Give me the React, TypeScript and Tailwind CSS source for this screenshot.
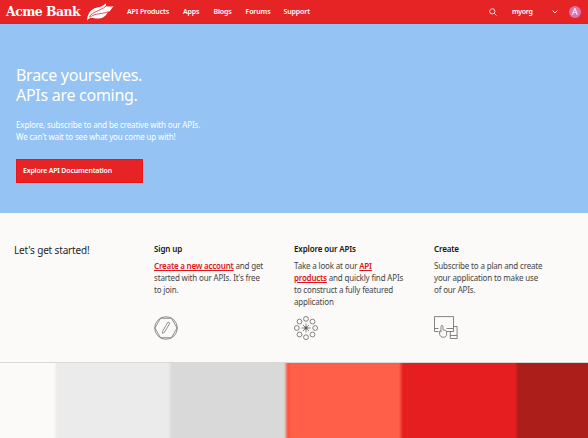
import type { ReactNode } from 'react';

function Leaf() {
  return (
    <svg className="ml-[3px] h-[18px] w-[28px] shrink-0" viewBox="0 0 28 18">
      <path
        fill="#fff"
        d="M1 17.500C1.500 12 3.500 8 8 5.600 11 4 16 4.500 19.500.500c.7.900.7 1.900.3 2.700C22 3.500 25 3.900 27.700 3c-1.500 1.300-1.800 2.600-3.200 4.300-.8 1-1.800 1.500-2.700 2C21 11 19.500 13 17 14.500c-3.500 1.800-8.500.6-12 .5C3 15.200 2 16.300 1 17.500Z"
      />
      <path
        fill="none"
        stroke="#e62325"
        strokeWidth=".8"
        d="M3 14.300C7 8 13.500 8.500 20 3.200M4 14.300C9 9.800 16 11.500 22.500 8.600"
      />
    </svg>
  );
}

function Header() {
  return (
    <header className="flex h-6 shrink-0 items-center border-b border-[#ee1c1c] bg-[#e62325] pl-[6px] pr-[7px] text-white">
      <div className="w-[77px] whitespace-nowrap font-['DejaVu_Serif_Condensed','DejaVu_Serif',serif] text-[13.800px] font-bold leading-none tracking-[-0.500px]">
        Acme Bank
      </div>
      <Leaf />
      <nav className="ml-[13px] flex whitespace-nowrap pt-[2px] text-[7px] font-semibold tracking-[-0.120px]">
        <span className="w-[56px]">API Products</span>
        <span className="w-[30.500px]">Apps</span>
        <span className="w-[32px]">Blogs</span>
        <span className="w-[38px]">Forums</span>
        <span>Support</span>
      </nav>
      <svg className="ml-auto size-2" viewBox="0 0 8 8" fill="none" stroke="#fff" strokeWidth=".8">
        <circle cx="3.300" cy="3.300" r="2.600" />
        <path d="m5.200 5.200 2.300 2.300" />
      </svg>
      <span className="ml-[15px] w-[40px] pt-px text-[7px] font-semibold tracking-[-0.350px]">myorg</span>
      <svg className="h-[4px] w-[6px]" viewBox="0 0 6 4" fill="none" stroke="#fff" strokeWidth=".9">
        <path d="m.6.6 2.400 2.400L5.400.6" />
      </svg>
      <span className="ml-[11px] flex size-3 items-center justify-center rounded-full bg-[#d874ab] text-[9px] leading-none">A</span>
    </header>
  );
}

function Hero() {
  return (
    <section className="h-[189px] shrink-0 bg-[#95c3f3] pl-4 pt-[41px] text-white">
      <h1 className="whitespace-nowrap text-[16px] font-normal leading-[20px] tracking-[-0.280px]">
        <span className="block">Brace yourselves.</span>
        <span className="block">APIs are coming.</span>
      </h1>
      <p className="mt-[14px] whitespace-nowrap text-[8px] leading-[12px] tracking-[-0.150px]">
        <span className="block">Explore, subscribe to and be creative with our APIs.</span>
        <span className="block">We can't wait to see what you come up with!</span>
      </p>
      <button className="mt-[16px] flex h-6 w-[127px] items-center border border-[#ee1418] bg-[#e62325] pl-[6px] text-[7px] font-semibold tracking-[-0.200px]">
        Explore API Documentation
      </button>
    </section>
  );
}

function Step({ title, children, icon }: { title: string; children: ReactNode; icon: ReactNode }) {
  return (
    <div className="flex h-full w-[140px] flex-col">
      <h3 className="text-[8px] font-semibold leading-[12px] tracking-[-0.130px] text-[#161616]">{title}</h3>
      <p className="mt-[5px] h-[56px] whitespace-nowrap text-[8px] leading-[12px] tracking-[-0.170px] text-[#454545]">{children}</p>
      {icon}
    </div>
  );
}

function Link({ children }: { children: ReactNode }) {
  return <a className="font-semibold tracking-[-0.220px] text-[#e3141b] underline decoration-[0.700px] underline-offset-1">{children}</a>;
}

function PencilIcon() {
  return (
    <svg className="size-6" viewBox="0 0 24 24" fill="none" stroke="#666" strokeWidth=".7">
      <circle cx="12" cy="12" r="11.300" />
      <path d="M6.500 2.300h11l5.600 9.700-5.600 9.700h-11L.9 12Z" />
      <path d="m8.600 15.200 5.400-9.200 1.900 1.100-5.400 9.200-2 1Z" />
    </svg>
  );
}

function NetworkIcon() {
  const dots = [[12, 2.900], [18.500, 5.600], [21.200, 12], [18.500, 18.500], [12, 21.200], [5.500, 18.500], [2.800, 12], [5.500, 5.600]];
  return (
    <svg className="size-6" viewBox="0 0 24 24" fill="none" stroke="#666" strokeWidth=".8">
      {dots.map(([x, y]) => <circle key={`${x}-${y}`} cx={x} cy={y} r="2.400" />)}
      <path d="M12 7.500v9M7.500 12h9M8.900 8.900l6.200 6.200M15.100 8.900l-6.200 6.200" />
      <circle cx="12" cy="12" r="1.100" fill="#222" />
    </svg>
  );
}

function DevicesIcon() {
  return (
    <svg className="size-6" viewBox="0 0 24 24" fill="none" stroke="#666" strokeWidth=".8">
      <path d="M4.500 15.500h-4V.6h19v14.900h-7M.5 12.500h4M12.500 12.500h7" />
      <path d="M19.500 10.500h3.600v12h-6.800v-7M16.300 19.500h6.800" />
      <path d="M7 16.500v-6c0-1.500 2-1.500 2 0v3.300l2.700.7c.7.2.9.6.9 1.300v2.500c0 2-1.200 3-3.200 3s-3.200-1-3.700-3l-.4-2.500c0-.8.700-1.300 1.700-.8" fill="#fbfaf8" />
    </svg>
  );
}

function GettingStarted() {
  return (
    <section className="flex h-[150px] shrink-0 border-b border-[#d8d8d8] bg-[#fbfaf8] pl-[14px] pt-[30px]">
      <h2 className="w-[140px] whitespace-nowrap text-[10px] font-normal leading-[14px] tracking-[-0.150px] text-[#262626]">Let's get started!</h2>
      <Step title="Sign up" icon={<PencilIcon />}>
        <span className="block"><Link>Create a new account</Link> and get</span>
        <span className="block">started with our APIs. It's free</span>
        <span className="block">to join.</span>
      </Step>
      <Step title="Explore our APIs" icon={<NetworkIcon />}>
        <span className="block">Take a look at our <Link>API</Link></span>
        <span className="block"><Link>products</Link> and quickly find APIs</span>
        <span className="block">to construct a fully featured</span>
        <span className="block">application</span>
      </Step>
      <Step title="Create" icon={<DevicesIcon />}>
        <span className="block">Subscribe to a plan and create</span>
        <span className="block">your application to make use</span>
        <span className="block">of our APIs.</span>
      </Step>
    </section>
  );
}

export default function App() {
  return (
    <main className="flex h-[438px] w-[588px] flex-col overflow-hidden bg-[#fbfaf8] font-['Noto_Sans',sans-serif]">
      <Header />
      <Hero />
      <GettingStarted />
      <div className="flex-1 bg-[linear-gradient(to_right,#fbfaf8_54px,#ebebeb_57px,#ebebeb_168px,#d9d9d9_172px,#d9d9d9_284px,#ff5138_288px,#ff5e49_291px,#ff5e49_399px,#e71e20_403px,#e71e20_515px,#ab1e19_518px)]" />
    </main>
  );
}
